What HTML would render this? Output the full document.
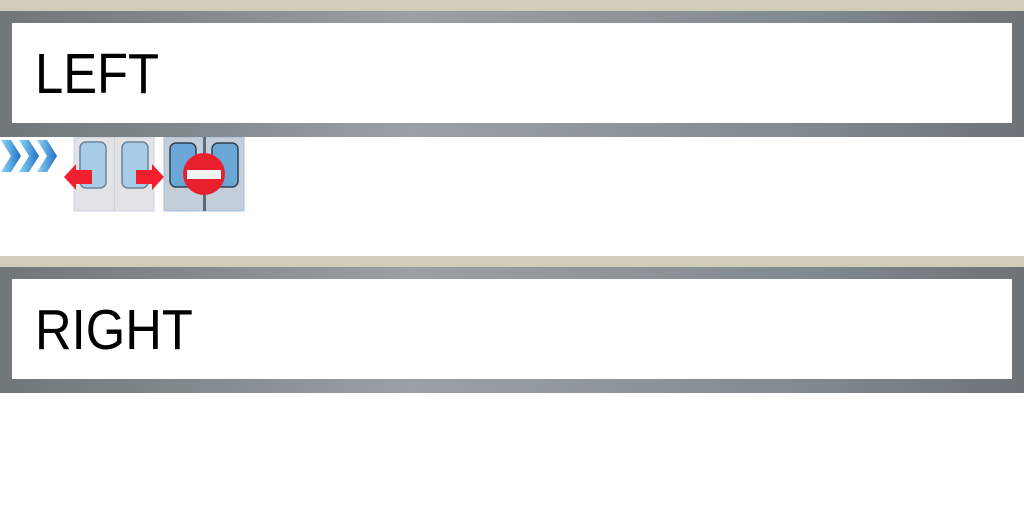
<!DOCTYPE html>
<html><head><style>
body{margin:0;width:1024px;height:512px;background:#fff;position:relative;overflow:hidden;font-family:"Liberation Sans",sans-serif}
.beige{position:absolute;left:0;width:1024px;height:11px;background:#d1cbb8}
.frame{position:absolute;left:0;width:1024px;height:126px;background:linear-gradient(90deg,#6f7779,#848b90 20%,#9aa0a6 40%,#8e959b 60%,#808890 80%,#6d7378)}
.box{position:absolute;left:12px;top:12px;width:1000px;height:100px;background:#fff}
.t{position:absolute;left:23px;top:18px;font-size:57px;color:#000;transform:scaleX(.89);transform-origin:left}
</style></head><body>
<div class="beige" style="top:0"></div>
<div class="frame" style="top:11px"><div class="box"><div class="t">LEFT</div></div></div>
<div class="beige" style="top:256px"></div>
<div class="frame" style="top:267px"><div class="box"><div class="t">RIGHT</div></div></div>

<svg style="position:absolute;left:0;top:137px" width="250" height="76">
<defs><linearGradient id="c" x1="0" x2="1"><stop offset="0" stop-color="#8fd6f5"/><stop offset="1" stop-color="#1f6fc8"/></linearGradient></defs>
<g fill="url(#c)">
<path d="M1 3h10l10 16-10 16H1l10-16z"/>
<path d="M19 3h10l10 16-10 16H19l10-16z"/>
<path d="M37 3h10l10 16-10 16H37l10-16z"/>
</g>
<rect x="74" y="0" width="80" height="74" fill="#e3e3e6" stroke="#c7d6ea"/>
<rect x="114" y="0" width="1" height="74" fill="#c9d4e0"/>
<rect x="80" y="5" width="26" height="46" rx="6" fill="#a8cde8" stroke="#6f8296" stroke-width="1.5"/>
<rect x="122" y="5" width="26" height="46" rx="6" fill="#a8cde8" stroke="#6f8296" stroke-width="1.5"/>
<path d="M64 40l12-13v6h16v14H76v6z" fill="#f2202f"/>
<path d="M164 40l-12-13v6h-16v14h16v6z" fill="#f2202f"/>
<rect x="164" y="0" width="80" height="74" fill="#c3ced8" stroke="#9fbfe0"/>
<rect x="203" y="0" width="3" height="74" fill="#5f6c78"/>
<rect x="170" y="6" width="26" height="44" rx="6" fill="#6aa6d6" stroke="#304050" stroke-width="1.5"/>
<rect x="212" y="6" width="26" height="44" rx="6" fill="#6aa6d6" stroke="#304050" stroke-width="1.5"/>
<circle cx="204" cy="37" r="21" fill="#e8202e"/>
<rect x="187" y="33" width="34" height="9" fill="#f2f2f2"/>
</svg>
</body></html>
